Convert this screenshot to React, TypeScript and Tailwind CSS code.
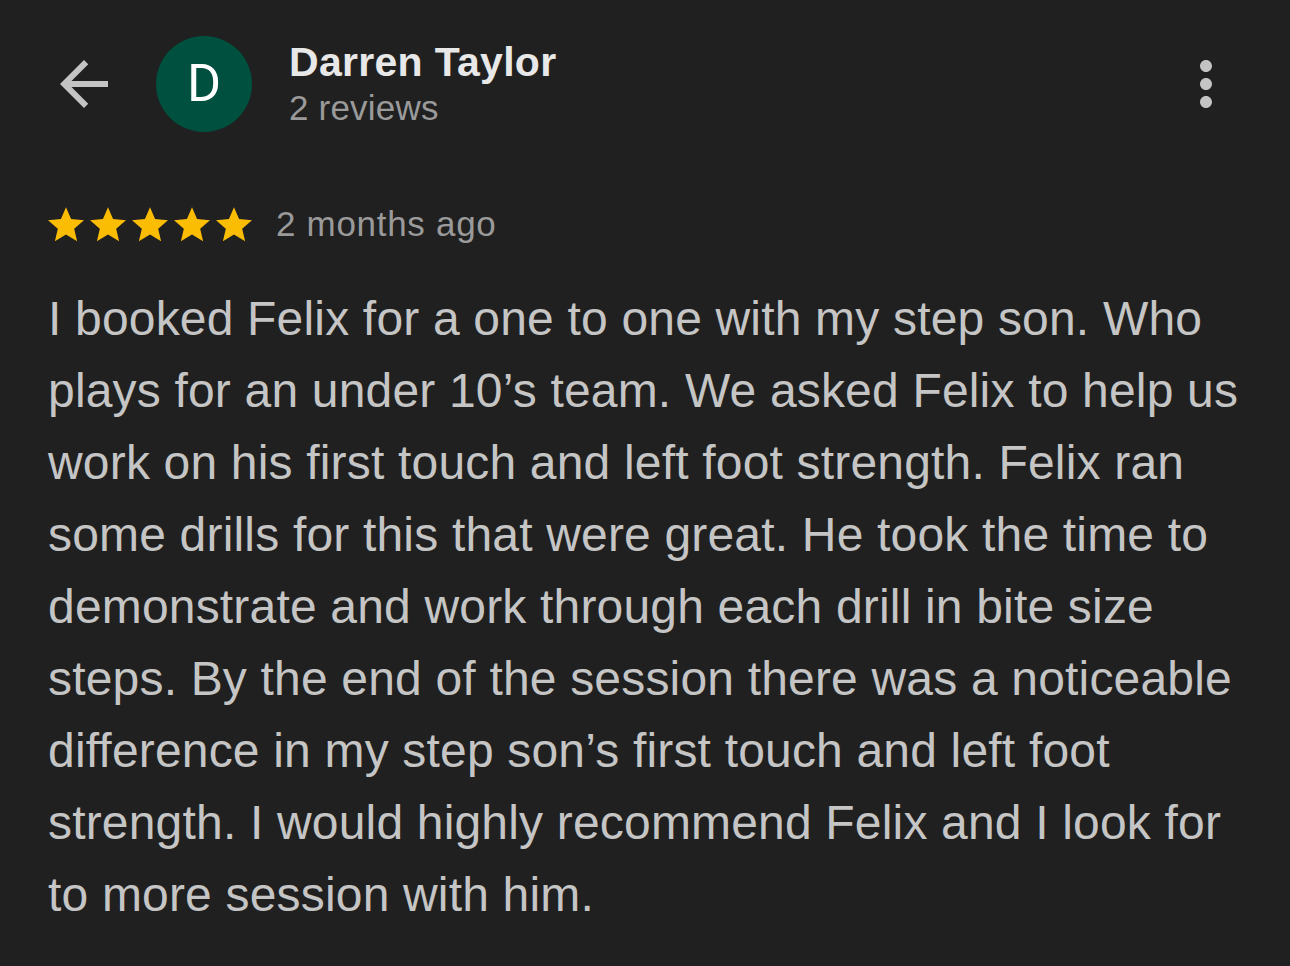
const review =
  "I booked Felix for a one to one with my step son. Who plays for an under 10\u2019s team. We asked Felix to help us work on his first touch and left foot strength. Felix ran some drills for this that were great. He took the time to demonstrate and work through each drill in bite size steps. By the end of the session there was a noticeable difference in my step son\u2019s first touch and left foot strength. I would highly recommend Felix and I look for to more session with him.";

const Star = () => (
  <svg viewBox="2 2 20 19.3" className="h-[35px] w-[36px]" fill="#fbbc04">
    <path d="M12 17.27L18.18 21l-1.64-7.03L22 9.24l-7.19-.61L12 2 9.19 8.63 2 9.24l5.46 4.73L5.82 21z" />
  </svg>
);

export default function App() {
  return (
    <div
      className="min-h-screen w-full bg-[#202020] px-12 pt-9"
      style={{ fontFamily: '"Liberation Sans", Arial, sans-serif' }}
    >
      {/* header */}
      <div className="flex h-24 items-center">
        <svg viewBox="0 0 24 24" className="h-[72px] w-[72px] shrink-0" fill="#c4c4c4">
          <path d="M20 11H7.83l5.59-5.59L12 4l-8 8 8 8 1.41-1.41L7.83 13H20v-2z" />
        </svg>
        <div
          className="ml-9 flex h-24 w-24 shrink-0 items-center justify-center rounded-full bg-[#00503f] text-[52px] text-white"
          style={{ fontFamily: "Roboto, sans-serif" }}
        >
          D
        </div>
        <div className="ml-[37px] flex flex-col">
          <div className="text-[41px] leading-[48px] font-bold tracking-[0.3px] text-[#e8e8e8]">Darren Taylor</div>
          <div className="text-[35px] leading-[44px] tracking-[0.2px] text-[#9a9a9a]">2 reviews</div>
        </div>
        <svg viewBox="0 0 24 24" className="ml-auto h-[72px] w-[72px] shrink-0" fill="#c4c4c4">
          <path d="M12 8c1.1 0 2-.9 2-2s-.9-2-2-2-2 .9-2 2 .9 2 2 2zm0 2c-1.1 0-2 .9-2 2s.9 2 2 2 2-.9 2-2-.9-2-2-2zm0 6c-1.1 0-2 .9-2 2s.9 2 2 2 2-.9 2-2-.9-2-2-2z" />
        </svg>
      </div>

      {/* rating */}
      <div className="mt-[72px] flex h-10 items-center">
        <div className="flex gap-1.5">
          <Star />
          <Star />
          <Star />
          <Star />
          <Star />
        </div>
        <span className="ml-6 text-[35px] leading-10 tracking-[0.7px] text-[#9a9a9a]">2 months ago</span>
      </div>

      {/* body */}
      <p className="mt-[39px] text-[48px] leading-[72px] tracking-[0.18px] text-[#c5c5c5]">{review}</p>
    </div>
  );
}
